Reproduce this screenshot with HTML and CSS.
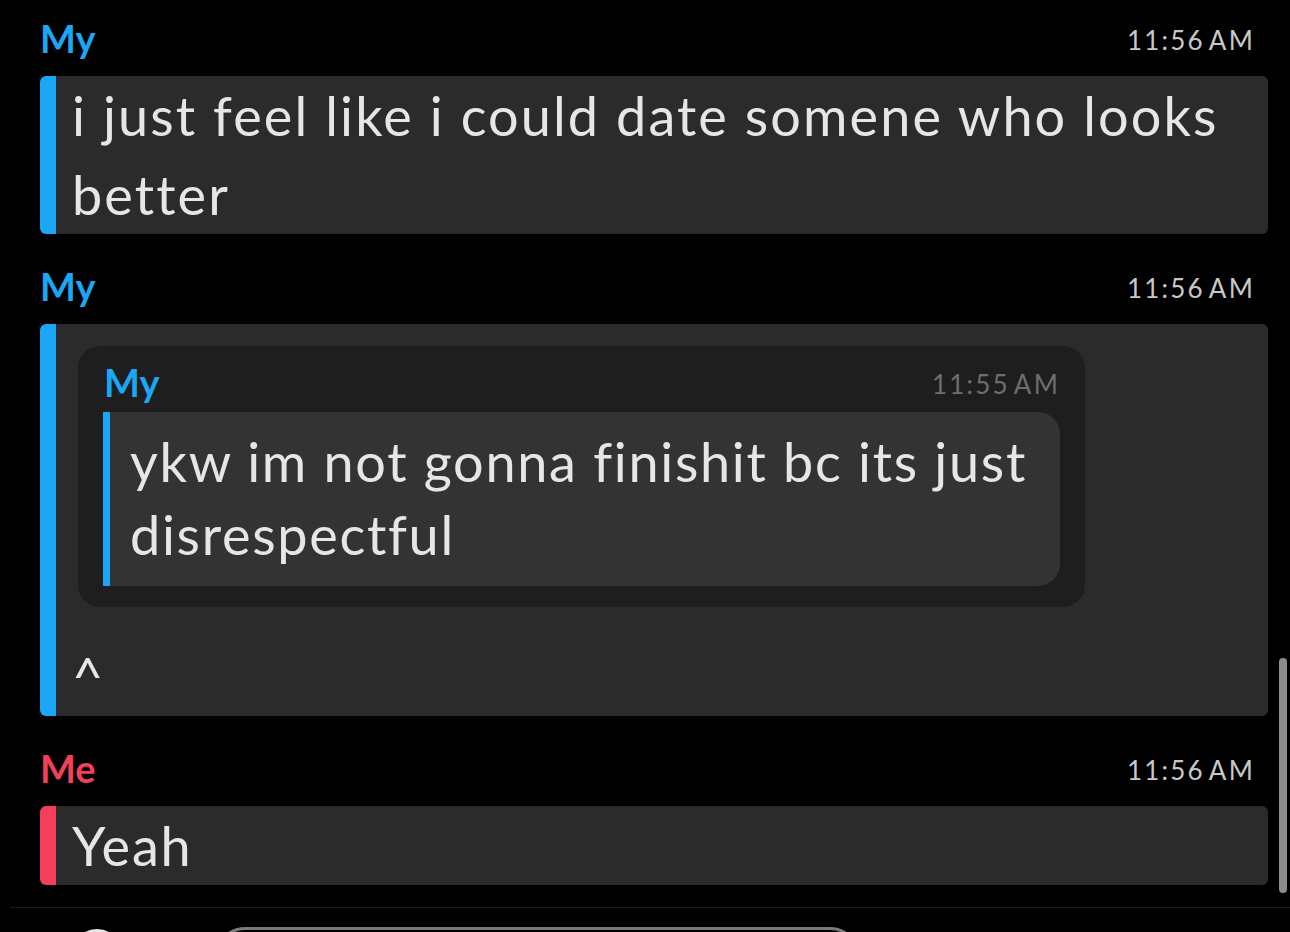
FILE: index.html
```html
<!DOCTYPE html>
<html lang="en">
<head>
  <meta charset="UTF-8" />
  <meta name="viewport" content="width=device-width, initial-scale=1.0"/>
  <title>Chat</title>
  <link rel="stylesheet" href="styles.css">
</head>
<body>
  <div class="chat">
    <div class="msg">
      <div class="msg-head">
        <span class="sender my">My</span>
        <span class="time">11:56 AM</span>
      </div>
      <div class="bubble my">
        <div class="bubble-text wide">i just feel like i could date somene who looks better</div>
      </div>
    </div>

    <div class="msg">
      <div class="msg-head">
        <span class="sender my">My</span>
        <span class="time">11:56 AM</span>
      </div>
      <div class="bubble my">
        <!-- quoted reply -->
        <div class="quote">
          <div class="quote-head">
            <span class="sender my">My</span>
            <span class="time dim">11:55 AM</span>
          </div>
          <div class="quote-bubble">ykw im not gonna finishit bc its just disrespectful</div>
        </div>
        <div class="bubble-text">^</div>
      </div>
    </div>

    <div class="msg">
      <div class="msg-head">
        <span class="sender me">Me</span>
        <span class="time">11:56 AM</span>
      </div>
      <div class="bubble me">
        <div class="bubble-text">Yeah</div>
      </div>
    </div>
  </div>

  <div class="compose">
    <div class="camera-btn"></div>
    <div class="chat-input"></div>
  </div>

  <div class="scrollbar"></div>
</body>
</html>
```

FILE: styles.css
```css
:root {
  --blue: #1ba6f6;
  --red: #f2405b;
  --bubble: #2b2b2b;
  --card: #1e1e1e;
  --inner: #333333;
  --text: #e6e6e6;
}

* {
  box-sizing: border-box;
}

html, body {
  height: 100%;
}

body {
  margin: 0;
  background: #000;
  color: var(--text);
  font-family: 'Lato', sans-serif;
  font-variant-ligatures: none;
  overflow: hidden;
  position: relative;
}

.chat {
  padding: 14px 22px 0 40px;
  display: flex;
  flex-direction: column;
  gap: 28px;
}

.msg-head {
  height: 62px;
  display: flex;
  justify-content: space-between;
  align-items: flex-start;
  padding-right: 13px;
}

.sender {
  font-size: 38px;
  font-weight: 700;
  line-height: 48px;
}

.sender.my {
  color: var(--blue);
}

.sender.me {
  color: var(--red);
}

.time {
  font-size: 26px;
  line-height: 52px;
  letter-spacing: 2.2px;
  word-spacing: -4px;
  color: #c8c8c8;
}

.time.dim {
  color: #6e6e6e;
}

.bubble {
  display: flow-root;
  background: var(--bubble);
  border-left: 16px solid var(--blue);
  border-radius: 6px;
  padding: 0 16px;
}

.bubble.me {
  border-left-color: var(--red);
}

.bubble-text {
  font-size: 54px;
  line-height: 79px;
  letter-spacing: 1.8px;
}

.bubble-text.wide {
  letter-spacing: 2.1px;
}

/* reply card inside a bubble */
.quote {
  background: var(--card);
  border-radius: 22px;
  margin: 22px 167px 30px 6px;
  padding: 0 25px 21px 25px;
}

.quote-head {
  height: 66px;
  padding: 12px 0 0 1px;
  display: flex;
  justify-content: space-between;
  align-items: flex-start;
}

.quote-bubble {
  background: var(--inner);
  border-left: 7px solid var(--blue);
  border-radius: 0 22px 22px 0;
  padding: 13px 20px 15px;
  font-size: 54px;
  line-height: 73px;
  letter-spacing: 1.7px;
}

.compose {
  margin-top: 22px;
  border-top: 1px solid #1c1c1c;
  margin-left: 10px;
  display: flex;
  align-items: flex-start;
  padding-top: 19px;
}

.camera-btn {
  width: 50px;
  height: 50px;
  border: 3px solid #e8e8e8;
  border-radius: 50%;
  margin: 2px 0 0 62px;
  flex-shrink: 0;
}

.chat-input {
  width: 645px;
  height: 60px;
  border: 3px solid #7a7a7a;
  border-radius: 30px;
  margin-left: 93px;
}

.scrollbar {
  position: absolute;
  right: 3px;
  top: 658px;
  width: 8px;
  height: 235px;
  border-radius: 4px;
  background: #8c8c8c;
}
```
